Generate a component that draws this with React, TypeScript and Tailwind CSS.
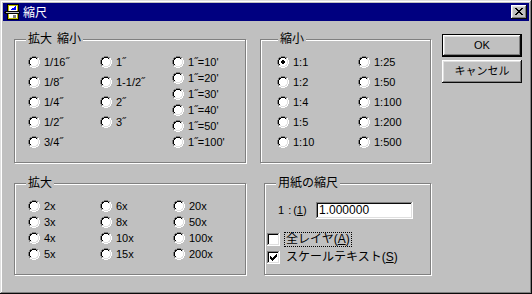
import React from "react";

type Px = { x: number; y: number; c: string };

function buildRadio(): Px[] {
  const outer: Record<number, number[]> = {
    0: [4, 5, 6, 7], 1: [2, 3, 8, 9], 2: [1, 10], 3: [1, 10], 4: [0, 11], 5: [0, 11],
    6: [0, 11], 7: [0, 11], 8: [1, 10], 9: [1, 10], 10: [2, 3, 8, 9], 11: [4, 5, 6, 7],
  };
  const inner: Record<number, number[]> = {
    1: [4, 5, 6, 7], 2: [2, 3, 8, 9], 3: [2, 9], 4: [1, 10], 5: [1, 10], 6: [1, 10],
    7: [1, 10], 8: [2, 9], 9: [2, 3, 8, 9], 10: [4, 5, 6, 7],
  };
  const fill: Record<number, [number, number]> = {
    2: [4, 7], 3: [3, 8], 4: [2, 9], 5: [2, 9], 6: [2, 9], 7: [2, 9], 8: [3, 8], 9: [4, 7],
  };
  const r: Px[] = [];
  for (const [ys, xs] of Object.entries(outer)) {
    const y = +ys;
    for (const x of xs) r.push({ x, y, c: x + y <= 10 ? "#808080" : "#ffffff" });
  }
  for (const [ys, xs] of Object.entries(inner)) {
    const y = +ys;
    for (const x of xs) r.push({ x, y, c: x + y <= 10 ? "#000000" : "#dfdfdf" });
  }
  for (const [ys, [a, b]] of Object.entries(fill)) {
    const y = +ys;
    for (let x = a; x <= b; x++) r.push({ x, y, c: "#ffffff" });
  }
  return r;
}

const RADIO = buildRadio();

function Radio({ checked }: { checked?: boolean }) {
  return (
    <svg width="12" height="12" viewBox="0 0 12 12" shapeRendering="crispEdges" className="block shrink-0">
      {RADIO.map((p, i) => (
        <rect key={i} x={p.x} y={p.y} width="1" height="1" fill={p.c} />
      ))}
      {checked && <path d="M5 4h2v1h1v2h-1v1h-2v-1h-1v-2h1z" fill="#000" />}
    </svg>
  );
}

function Checkbox({ checked }: { checked?: boolean }) {
  return (
    <svg width="13" height="13" viewBox="0 0 13 13" shapeRendering="crispEdges" className="block shrink-0">
      <rect x="0" y="0" width="13" height="13" fill="#fff" />
      <rect x="0" y="0" width="12" height="1" fill="#808080" />
      <rect x="0" y="0" width="1" height="12" fill="#808080" />
      <rect x="1" y="1" width="10" height="1" fill="#000" />
      <rect x="1" y="1" width="1" height="10" fill="#000" />
      <rect x="1" y="11" width="11" height="1" fill="#dfdfdf" />
      <rect x="11" y="1" width="1" height="11" fill="#dfdfdf" />
      {checked && (
        <path
          transform="translate(3 3)"
          d="M7 0H6V1H5V2H4V3H3V4H2V3H1V2H0V5H1V6H2V7H3V6H4V5H5V4H6V3H7V0Z"
          fill="#000"
        />
      )}
    </svg>
  );
}

function RadioItem({ label, checked, className }: { label: string; checked?: boolean; className: string }) {
  return (
    <div className={`flex items-center gap-[4px] ${className}`}>
      <Radio checked={checked} />
      <span className="text-[11px] leading-[13px] whitespace-nowrap">{label}</span>
    </div>
  );
}

function Group({
  label,
  labelClass,
  className,
  children,
}: {
  label: React.ReactNode;
  labelClass: string;
  className: string;
  children: React.ReactNode;
}) {
  return (
    <div className={`relative border border-[#808080] shadow-[inset_1px_1px_#fff,1px_1px_#fff] ${className}`}>
      <span className={`absolute -top-[8px] px-[2px] bg-[#c0c0c0] text-[12px] leading-[14px] whitespace-nowrap flex ${labelClass}`}>
        {label}
      </span>
      {children}
    </div>
  );
}

function TitleIcon() {
  return (
    <svg width="16" height="16" viewBox="0 0 16 16" shapeRendering="crispEdges" className="block shrink-0">
      <rect x="3" y="0" width="12" height="16" fill="#000" />
      <rect x="4" y="1" width="10" height="14" fill="#c0c000" />
      <rect x="5" y="2" width="8" height="5" fill="#fff" />
      <polygon points="6,6 12,2 12,6" fill="#0000ff" />
      <rect x="5" y="10" width="8" height="4" fill="#fff" />
      <rect x="9" y="11" width="3" height="3" fill="#808080" />
      <rect x="1" y="7" width="15" height="3" fill="#000" />
      <rect x="2" y="8" width="13" height="1" fill="#c0c0c0" />
      <polygon points="0,8.5 2,6 2,11" fill="#000" />
    </svg>
  );
}

const raised =
  "shadow-[inset_-1px_-1px_#0a0a0a,inset_1px_1px_#fff,inset_-2px_-2px_#808080,inset_2px_2px_#dfdfdf]";

export default function App() {
  return (
    <div className="w-[532px] h-[294px] bg-[#c0c0c0] p-[3px] shadow-[inset_-1px_-1px_#0a0a0a,inset_1px_1px_#dfdfdf,inset_-2px_-2px_#808080,inset_2px_2px_#fff] font-['Liberation_Sans','Noto_Sans_CJK_JP',sans-serif] text-[12px] text-black overflow-hidden">
      {/* Title bar */}
      <div className="h-[18px] bg-[#000080] flex items-center pl-[1px] pr-[2px]">
        <TitleIcon />
        <span className="ml-[3px] text-white text-[12px] leading-[14px] font-['Noto_Sans_CJK_JP',sans-serif]">縮尺</span>
        <div className={`ml-auto w-[16px] h-[14px] bg-[#c0c0c0] ${raised} pl-[4px] pt-[3px]`}>
          <svg width="8" height="7" viewBox="0 0 8 7" shapeRendering="crispEdges" className="block">
            <path
              d="M0 0H2V1H3V2H5V1H6V0H8V1H7V2H6V3H5V4H6V5H7V6H8V7H6V6H5V5H3V6H2V7H0V6H1V5H2V4H3V3H2V2H1V1H0V0Z"
              fill="#000"
            />
          </svg>
        </div>
      </div>

      {/* Body */}
      <div className="flex items-start pl-[11px] pt-[13px]">
        {/* Left column */}
        <div className="flex flex-col gap-[20px] w-[232px] mt-[5px]">
          <Group
            label={
              <>
                <span>拡大</span>
                <span className="ml-[5px]">縮小</span>
              </>
            }
            labelClass="left-[11px]"
            className="h-[124px]"
          >
            <div className="flex pl-[13px]">
              <div className="w-[72px] flex flex-col pt-[12px]">
                {["1/16˝", "1/8˝", "1/4˝", "1/2˝", "3/4˝"].map((l) => (
                  <RadioItem key={l} label={l} className="h-[20px]" />
                ))}
              </div>
              <div className="w-[72px] flex flex-col pt-[12px]">
                {["1˝", "1-1/2˝", "2˝", "3˝"].map((l) => (
                  <RadioItem key={l} label={l} className="h-[20px]" />
                ))}
              </div>
              <div className="flex flex-col pt-[14px]">
                {["1˝=10'", "1˝=20'", "1˝=30'", "1˝=40'", "1˝=50'", "1˝=100'"].map((l) => (
                  <RadioItem key={l} label={l} className="h-[16px]" />
                ))}
              </div>
            </div>
          </Group>
          <Group label="拡大" labelClass="left-[11px]" className="h-[92px]">
            <div className="flex pl-[13px] pt-[14px]">
              <div className="w-[72px] flex flex-col">
                {["2x", "3x", "4x", "5x"].map((l) => (
                  <RadioItem key={l} label={l} className="h-[16px]" />
                ))}
              </div>
              <div className="w-[73px] flex flex-col">
                {["6x", "8x", "10x", "15x"].map((l) => (
                  <RadioItem key={l} label={l} className="h-[16px]" />
                ))}
              </div>
              <div className="flex flex-col">
                {["20x", "50x", "100x", "200x"].map((l) => (
                  <RadioItem key={l} label={l} className="h-[16px]" />
                ))}
              </div>
            </div>
          </Group>
        </div>

        {/* Middle column */}
        <div className="flex flex-col gap-[20px] ml-[14px] mt-[5px]">
          <Group label="縮小" labelClass="left-[17px]" className="w-[171px] h-[124px]">
            <div className="flex pl-[16px] pt-[12px]">
              <div className="w-[81px] flex flex-col">
                {["1:1", "1:2", "1:4", "1:5", "1:10"].map((l, i) => (
                  <RadioItem key={l} label={l} checked={i === 0} className="h-[20px]" />
                ))}
              </div>
              <div className="flex flex-col">
                {["1:25", "1:50", "1:100", "1:200", "1:500"].map((l) => (
                  <RadioItem key={l} label={l} className="h-[20px]" />
                ))}
              </div>
            </div>
          </Group>
          <Group label="用紙の縮尺" labelClass="left-[11px]" className="w-[167px] h-[92px] ml-[4px]">
            <div className="flex flex-col pt-[18px]">
              <div className="flex items-center h-[17px] pl-[13px]">
                <span className="w-[38px] flex text-[11px] leading-[13px]">
                  <span>1</span>
                  <span className="ml-[4px]">:</span>
                  <span className="ml-[2px]">
                    (<span className="underline">1</span>)
                  </span>
                </span>
                <div className="w-[97px] h-[17px] bg-white shadow-[inset_-1px_-1px_#fff,inset_1px_1px_#808080,inset_-2px_-2px_#dfdfdf,inset_2px_2px_#0a0a0a] pl-[3px] flex items-center text-[12px] leading-[13px]">
                  1.000000
                </div>
              </div>
              <div className="flex flex-col pl-[2px] mt-[11px]">
                <div className="flex items-center h-[18px]">
                  <Checkbox />
                  <span className="ml-[4px] border border-dotted border-black px-[1px] text-[12px] leading-[13px] whitespace-nowrap">
                    全レイヤ(<span className="underline">A</span>)
                  </span>
                </div>
                <div className="flex items-center h-[18px]">
                  <Checkbox checked />
                  <span className="ml-[4px] border border-transparent px-[1px] text-[12px] leading-[13px] whitespace-nowrap">
                    スケールテキスト(<span className="underline">S</span>)
                  </span>
                </div>
              </div>
            </div>
          </Group>
        </div>

        {/* Buttons */}
        <div className="flex flex-col gap-[3px] ml-[11px]">
          <button className={`w-[80px] h-[23px] border border-black bg-[#c0c0c0] ${raised} text-[11px] leading-[13px] flex items-center justify-center`}>
            OK
          </button>
          <button className={`w-[80px] h-[23px] bg-[#c0c0c0] ${raised} text-[11px] leading-[13px] flex items-center justify-center`}>
            キャンセル
          </button>
        </div>
      </div>
    </div>
  );
}
